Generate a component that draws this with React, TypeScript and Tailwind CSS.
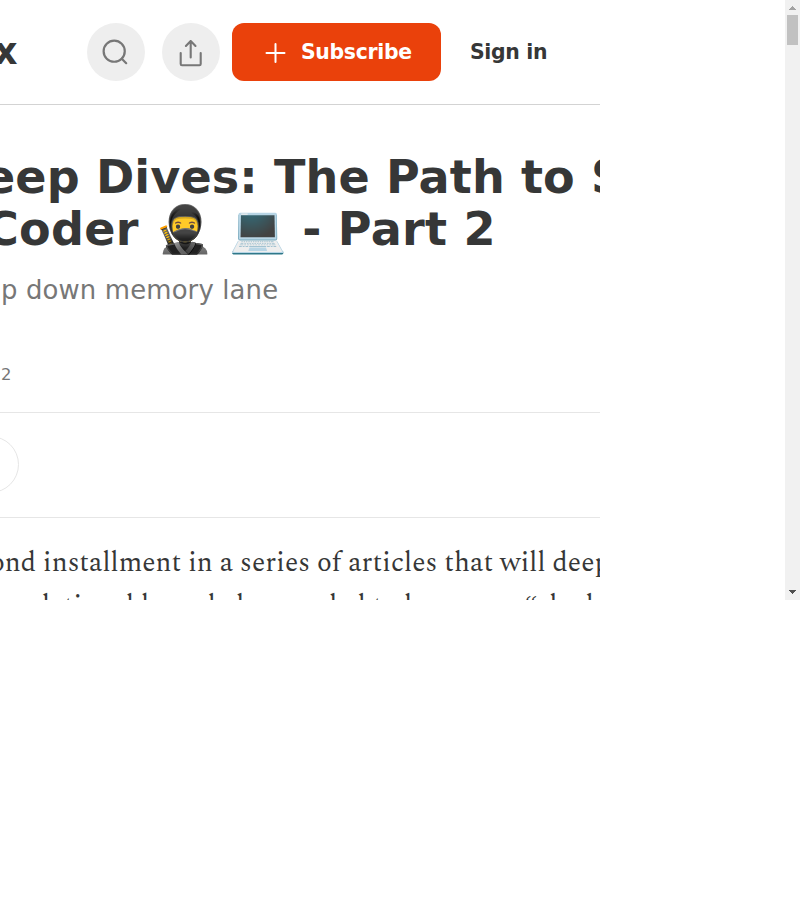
function ScrollBar() {
  return (
    <div className="flex h-full w-[15px] flex-col items-center bg-[#f1f1f1]">
      <svg className="block h-[15px] w-[15px] shrink-0" viewBox="0 0 15 15" shapeRendering="crispEdges">
        <path d="M4 10h7v-1h-1v-1h-1v-1h-1v-1h-1v1h-1v1h-1v1h-1z" fill="#a3a3a3" />
      </svg>
      <div className="h-[30px] w-[11px] bg-[#c1c1c1]" />
      <div className="grow" />
      <svg className="block h-[15px] w-[15px] shrink-0" viewBox="0 0 15 15" shapeRendering="crispEdges">
        <path d="M4 5h7v1h-1v1h-1v1h-1v1h-1v-1h-1v-1h-1v-1h-1z" fill="#505050" />
      </svg>
    </div>
  );
}

function Header() {
  return (
    <header className="flex h-[105px] items-center border-b border-[#d3d3d3]">
      <div className="w-[87px] shrink-0">
        <span className="ml-[-6px] text-[36.5px] leading-none font-bold">x</span>
      </div>
      <button className="flex h-[57.6px] w-[57.6px] shrink-0 items-center justify-center rounded-full bg-[#eee] text-[#777]">
        <svg width="28.8" height="28.8" viewBox="0 0 24 24" fill="none" stroke="currentColor" strokeWidth="1.85" strokeLinecap="round" strokeLinejoin="round">
          <circle cx="11" cy="11" r="8.8" />
          <path d="m21 21-3.700-3.700" />
        </svg>
      </button>
      <button className="ml-[17.4px] flex h-[57.6px] w-[57.6px] shrink-0 items-center justify-center rounded-full bg-[#eee] text-[#777]">
        <svg width="29" height="29" viewBox="0 0 29 29" fill="none" stroke="currentColor" strokeWidth="2.1" strokeLinecap="round" strokeLinejoin="round">
          <path d="M4.700 15v11q0 1.300 1.300 1.300h17.400q1.300 0 1.300-1.300V15M14.700 19.500V3M9.900 8l4.800-5 4.800 5" />
        </svg>
      </button>
      <button className="ml-[12.4px] flex h-[58px] w-[209px] shrink-0 items-center rounded-[12px] bg-[#ea410b] pl-[33px] text-white">
        <svg width="21" height="21" viewBox="0 0 21 21" fill="none" stroke="currentColor" strokeWidth="2" strokeLinecap="round">
          <path d="M10.500 2v18M1.500 11h18" />
        </svg>
        <span className="ml-[15px] text-[20.4px] leading-[28px] font-bold tracking-[-0.3px]">Subscribe</span>
      </button>
      <a className="ml-[29px] text-[20.4px] leading-[28px] font-bold tracking-[-0.3px] whitespace-nowrap">Sign in</a>
    </header>
  );
}

export default function App() {
  return (
    <div className="h-[900px] w-[800px] overflow-hidden bg-white font-['DejaVu_Sans',sans-serif] text-[#363737]">
      <div className="flex h-[600px] justify-between overflow-hidden">
        <main className="h-[600px] w-[600px] overflow-hidden">
          <Header />
          <h1 className="mt-[47px] text-[46.08px] leading-[51.84px] font-bold whitespace-nowrap">
            <div className="ml-[-16px] tracking-[0.11px]">eep Dives: The Path to S</div>
            <div className="ml-[-15px] tracking-[0.26px]">Coder 🥷 💻 - Part 2</div>
          </h1>
          <p className="mt-[17px] ml-[1px] h-[35px] text-[25.92px] leading-[34.56px] tracking-[0.14px] whitespace-nowrap text-[#777]">p down memory lane</p>
          <div className="mt-[53px] h-[52px] border-b border-[#e6e6e6] text-[16.4px] leading-[28.8px] text-[#777]">
            <span className="ml-px">2</span>
          </div>
          <div className="flex h-[105px] items-center border-b border-[#e6e6e6]">
            <div className="ml-[-39px] h-[57.6px] w-[57.6px] rounded-full border border-[#e6e6e6]" />
          </div>
          <div className="mt-[24px] font-['Spectral','Liberation_Serif',serif] text-[27.36px] leading-[43.78px] tracking-[0.07px] whitespace-nowrap">
            <div className="ml-[-10px]">ond installment in a series of articles that will deep</div>
            <div className="ml-[3.500px] tracking-[0.05px]">
              undational knowledge needed to become a <span className="font-['Liberation_Serif',serif] leading-none">“</span>shadow
            </div>
          </div>
        </main>
        <ScrollBar />
      </div>
    </div>
  );
}
